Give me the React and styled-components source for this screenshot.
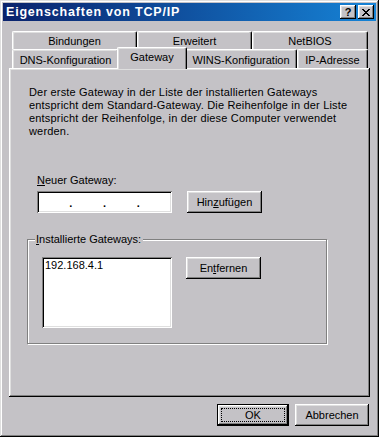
import React from 'react';
import styled, { createGlobalStyle } from 'styled-components';

const GlobalStyle = createGlobalStyle`
  html, body { margin: 0; padding: 0; background: #c4c2c6; }
  body { font-family: "Liberation Sans", Arial, sans-serif; font-size: 11px; color: #000; }
  * { box-sizing: border-box; }
`;

const FACE = '#c4c2c6';

const Window = styled.div`
  width: 379px;
  height: 437px;
  background: ${FACE};
  padding: 3px;
  display: flex;
  flex-direction: column;
  box-shadow: inset -1px -1px #000, inset 1px 1px #dfdfdf, inset -2px -2px #808080, inset 2px 2px #fff;
`;

const TitleBar = styled.div`
  height: 18px;
  background: linear-gradient(to right, #0a226c, #1683d6);
  display: flex;
  align-items: center;
  justify-content: space-between;
  padding: 0 2px 0 3px;
`;

const Title = styled.span`
  color: #fff;
  font-weight: bold;
  font-size: 12.5px;
  letter-spacing: 0.8px;
`;

const TitleButtons = styled.div`
  display: flex;
  gap: 2px;
`;

const TitleButton = styled.button`
  width: 16px;
  height: 14px;
  padding: 0;
  border: none;
  background: ${FACE};
  display: flex;
  align-items: center;
  justify-content: center;
  font-family: "Liberation Sans", Arial, sans-serif;
  font-weight: bold;
  font-size: 11px;
  line-height: 1;
  color: #000;
  box-shadow: inset -1px -1px #000, inset 1px 1px #fff, inset -2px -2px #808080, inset 2px 2px #dfdfdf;
`;

const Body = styled.div`
  padding: 10px 6px 0 6px;
  display: flex;
  flex-direction: column;
`;

const TabRows = styled.div`
  padding-left: 3px;
  display: flex;
  flex-direction: column;
`;

const TabRow = styled.div`
  display: flex;
  height: ${p => p.$h}px;
`;

const Tab = styled.div`
  width: ${p => p.$w}px;
  height: 100%;
  background: ${FACE};
  border-top: 1px solid #fff;
  border-left: 1px solid #fff;
  border-right: 1px solid #000;
  border-radius: 2px 2px 0 0;
  box-shadow: inset -1px 0 #808080, inset 1px 1px #dfdfdf;
  display: flex;
  justify-content: center;
  padding-top: ${p => p.$pt}px;
  white-space: nowrap;
  position: relative;
  ${p => p.$active && `
    width: ${p.$w + 4}px;
    height: 22px;
    margin: -2px -2px -1px -2px;
    z-index: 2;
    padding-top: 3px;
  `}
`;

const Panel = styled.div`
  height: 329px;
  position: relative;
  z-index: 1;
  box-shadow: inset -1px -1px #000, inset 1px 1px #fff, inset -2px -2px #808080, inset 2px 2px #dfdfdf;
  padding: 18px 0 0 19px;
  display: flex;
  flex-direction: column;
  align-items: flex-start;
`;

const Info = styled.p`
  margin: 0 0 0 1px;
  line-height: 13px;
  letter-spacing: 0.18px;
`;

const Label = styled.div`
  margin: 36px 0 4px 9px;
  line-height: 13px;
`;

const FieldRow = styled.div`
  display: flex;
  align-items: flex-start;
  gap: ${p => p.$gap}px;
  margin-left: ${p => p.$ml}px;
`;

const sunken = `
  background: #fff;
  box-shadow: inset 1px 1px #808080, inset -1px -1px #fff, inset 2px 2px #000, inset -2px -2px #dfdfdf;
`;

const IpField = styled.div`
  width: 135px;
  height: 22px;
  ${sunken}
  display: flex;
  padding: 0 2px;
  align-items: center;
`;

const Octet = styled.span`
  width: 30px;
`;

const Dot = styled.span`
  width: 4px;
  text-align: center;
  font-weight: bold;
  line-height: 1;
  transform: translateY(1px);
`;

const Button = styled.button`
  width: ${p => p.$w || 75}px;
  height: 22px;
  padding: 0;
  border: none;
  background: ${FACE};
  font-family: "Liberation Sans", Arial, sans-serif;
  font-size: 11px;
  color: #000;
  box-shadow: inset -1px -1px #000, inset 1px 1px #fff, inset -2px -2px #808080, inset 2px 2px #dfdfdf;
  position: relative;
  ${p => p.$default && `
    box-shadow: inset 0 0 0 1px #000, inset -2px -2px #000, inset 2px 2px #fff, inset -3px -3px #808080, inset 3px 3px #dfdfdf;
    outline: 1px dotted #000;
    outline-offset: -5px;
  `}
`;

const Group = styled.fieldset`
  margin: 20px 0 0 -1px;
  width: 300px;
  border: 1px solid #808080;
  box-shadow: 1px 1px 0 #fff, inset 1px 1px 0 #fff;
  padding: 11px 0 15px 14px;
  display: flex;
  gap: 14px;
  align-items: flex-start;
`;

const Legend = styled.legend`
  margin-left: -7px;
  padding: 0 2px 0 1px;
  background: ${FACE};
  line-height: 13px;
`;

const ListBox = styled.div`
  width: 130px;
  height: 71px;
  ${sunken}
  padding: 2px 3px;
  line-height: 13px;
`;

const Footer = styled.div`
  margin-top: 7px;
  display: flex;
  justify-content: flex-end;
  gap: 6px;
  padding-right: 1px;
`;

const U = styled.span`
  text-decoration: underline;
`;

const CloseIcon = () => (
  <svg width="8" height="7" viewBox="0 0 8 7" shapeRendering="crispEdges">
    <path d="M0 0h2v1h-2zM6 0h2v1h-2zM1 1h2v1h-2zM5 1h2v1h-2zM2 2h4v1h-4zM3 3h2v1h-2zM2 4h4v1h-4zM1 5h2v1h-2zM5 5h2v1h-2zM0 6h2v1h-2zM6 6h2v1h-2z" fill="#000" />
  </svg>
);

export default function App() {
  return (
    <>
      <GlobalStyle />
      <Window>
        <TitleBar>
          <Title>Eigenschaften von TCP/IP</Title>
          <TitleButtons>
            <TitleButton>?</TitleButton>
            <TitleButton><CloseIcon /></TitleButton>
          </TitleButtons>
        </TitleBar>
        <Body>
          <TabRows>
            <TabRow $h={18}>
              <Tab $w={125} $pt={3}>Bindungen</Tab>
              <Tab $w={115} $pt={3}>Erweitert</Tab>
              <Tab $w={116} $pt={3}>NetBIOS</Tab>
            </TabRow>
            <TabRow $h={19}>
              <Tab $w={107} $pt={4}>DNS-Konfiguration</Tab>
              <Tab $w={66} $pt={4} $active>Gateway</Tab>
              <Tab $w={112} $pt={4}>WINS-Konfiguration</Tab>
              <Tab $w={71} $pt={4}>IP-Adresse</Tab>
            </TabRow>
          </TabRows>
          <Panel>
            <Info>
              Der erste Gateway in der Liste der installierten Gateways<br />
              entspricht dem Standard-Gateway. Die Reihenfolge in der Liste<br />
              entspricht der Reihenfolge, in der diese Computer verwendet<br />
              werden.
            </Info>
            <Label><U>N</U>euer Gateway:</Label>
            <FieldRow $gap={15} $ml={9}>
              <IpField>
                <Octet /><Dot>.</Dot><Octet /><Dot>.</Dot><Octet /><Dot>.</Dot><Octet />
              </IpField>
              <Button>Hin<U>z</U>ufügen</Button>
            </FieldRow>
            <Group>
              <Legend><U>I</U>nstallierte Gateways:</Legend>
              <ListBox>192.168.4.1</ListBox>
              <Button>En<U>t</U>fernen</Button>
            </Group>
          </Panel>
          <Footer>
            <Button $w={72} $default>OK</Button>
            <Button $w={74}>Abbrechen</Button>
          </Footer>
        </Body>
      </Window>
    </>
  );
}
